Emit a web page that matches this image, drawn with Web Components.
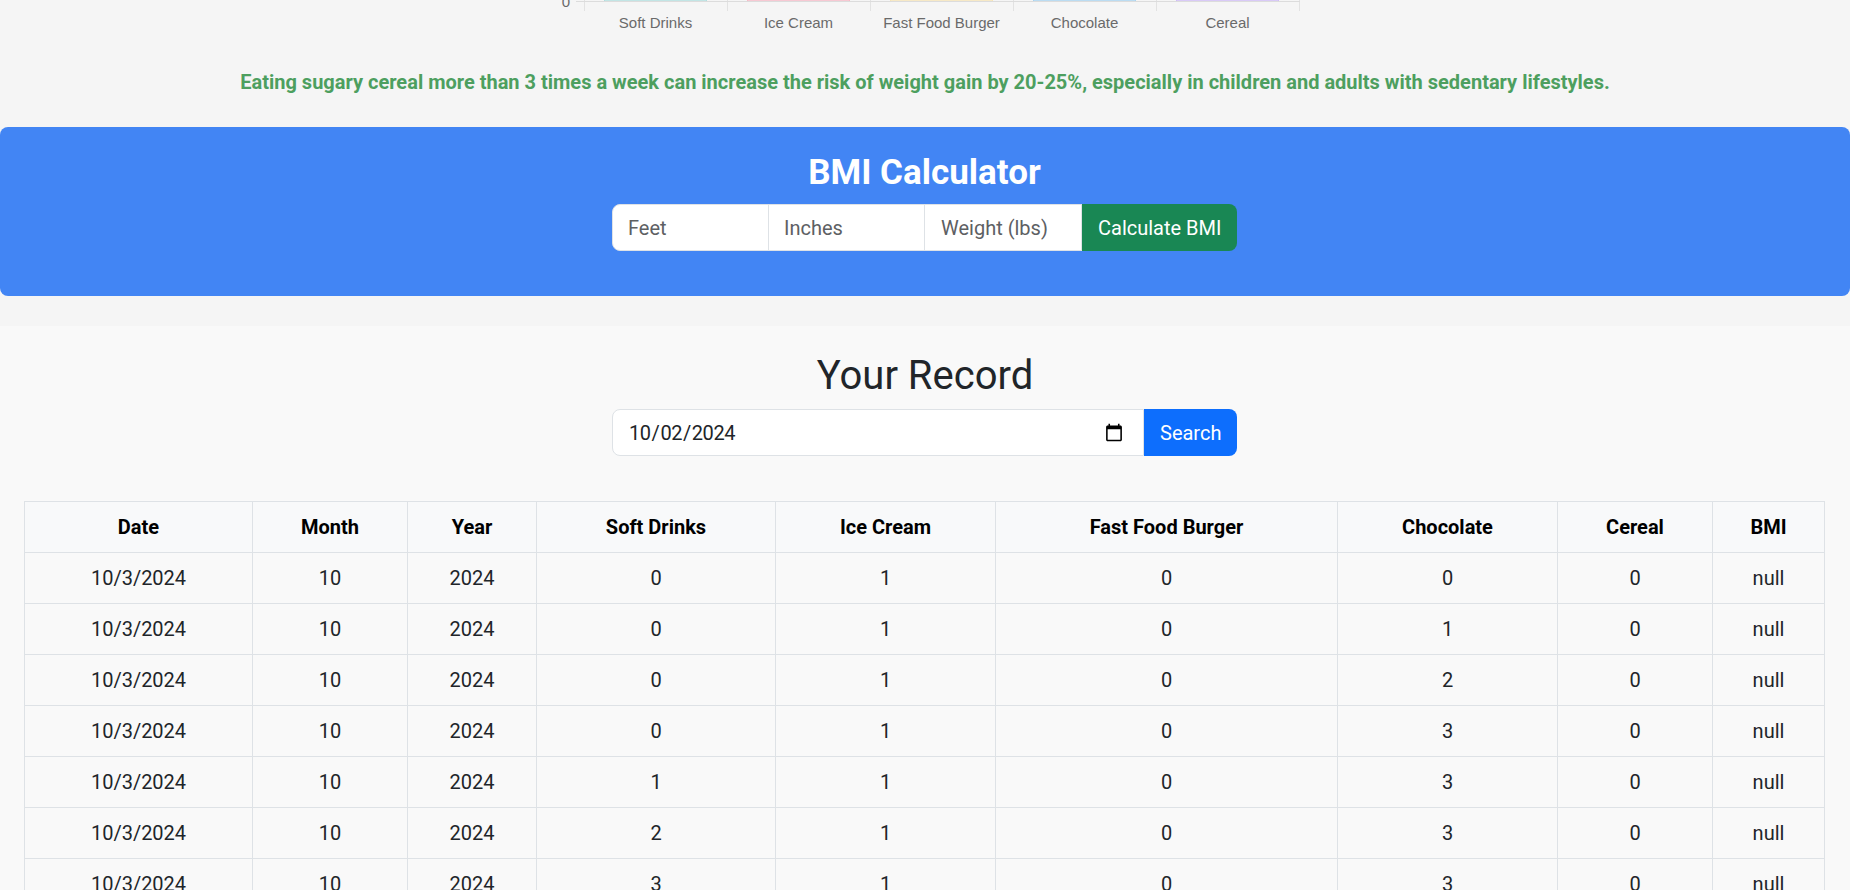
<!DOCTYPE html>
<html lang="en">
<head>
<meta charset="utf-8">
<title>BMI Calculator</title>
<style>
html,body{margin:0;padding:0;height:890px;overflow:hidden;background:#f5f5f5;font-family:Roboto,"Liberation Sans",sans-serif;}
</style>
</head>
<body>
<chart-axis></chart-axis>
<health-tip>Eating sugary cereal more than 3 times a week can increase the risk of weight gain by 20-25%, especially in children and adults with sedentary lifestyles.</health-tip>
<bmi-panel heading="BMI Calculator"></bmi-panel>
<record-section heading="Your Record"></record-section>
<script>
const define=(name,html,init)=>customElements.define(name,class extends HTMLElement{
  connectedCallback(){
    if(this.shadowRoot)return;
    const r=this.attachShadow({mode:'open'});
    r.innerHTML=typeof html==='function'?html(this):html;
    if(init)init(r,this);
  }
});

define('chart-axis',()=>{
  const bars=['75,192,192','255,99,132','255,206,86','54,162,235','153,102,255'];
  const labels=['Soft Drinks','Ice Cream','Fast Food Burger','Chocolate','Cereal'];
  let s='';
  for(let i=0;i<=5;i++){const x=584.5+i*143;s+=`<line x1="${x}" x2="${x}" y1="0" y2="11" stroke="#e2e2e2"/>`;}
  bars.forEach((b,i)=>{const x=604.5+i*143;
    s+=`<rect x="${x}" y="-2" width="102" height="3" fill="rgba(${b},.15)" stroke="rgba(${b},.35)" stroke-width="1"/>`;
    s+=`<text x="${x+51}" y="28" text-anchor="middle">${labels[i]}</text>`;
  });
  s+=`<line x1="576" x2="1300" y1="1.5" y2="1.5" stroke="#dcdcdc"/>`;
  s+=`<text x="566" y="7" text-anchor="middle">0</text>`;
  return `<style>:host{display:block;height:34px}svg{display:block;width:1850px;height:34px}
  text{font:15px "Liberation Sans",Arial,sans-serif;fill:#6a6a6a}</style>
  <svg viewBox="0 0 1850 34" role="img" aria-label="Intake chart axis">${s}</svg>`;
});

define('health-tip',`<style>:host{display:block;box-sizing:border-box;height:93px;padding-top:33px;text-align:center;
  font:700 20px/30px Roboto,"Liberation Sans",sans-serif;color:#4d9f5f}</style><slot></slot>`);

const fieldCss=`
  .group{display:flex;width:625px;margin-left:calc(50% - 313px)}
  input{box-sizing:border-box;flex:1 1 0;min-width:0;height:47px;margin:0;padding:8px 16px 8px 15px;font:400 20px/30px Roboto,"Liberation Sans",sans-serif;color:#212529;background:#fff;border:1px solid #dee2e6;border-radius:0;outline:0}
  input::placeholder{color:#5d6063;opacity:1}
  input:first-child{border-radius:8px 0 0 8px}
  input+input{margin-left:-1px}
  input:nth-child(3){padding-left:16px}
  button{box-sizing:border-box;flex:none;height:47px;margin:0;padding:8px 16px 8px 15px;text-align:left;white-space:nowrap;font:400 20px/30px Roboto,"Liberation Sans",sans-serif;color:#fff;border:1px solid transparent;border-radius:0 8px 8px 0;cursor:pointer}
`;

define('bmi-panel',h=>`<style>:host{display:block;box-sizing:border-box;height:169px;padding-top:25px;background:#4285f4;border-radius:8px;color:#fff;text-align:center}
  h2{margin:0 0 10px;padding-right:1px;font:700 35px/42px Roboto,"Liberation Sans",sans-serif}
  ${fieldCss}
  button{background:#198754;width:155px}
  </style>
  <h2>${h.getAttribute('heading')}</h2>
  <div class="group"><input placeholder="Feet" type="text"><input placeholder="Inches" type="text"><input placeholder="Weight (lbs)" type="text"><button>Calculate BMI</button></div>`);

define('record-table',()=>{
  const cols=[228,155,129,239,220,342,220,155,112];
  const head=['Date','Month','Year','Soft Drinks','Ice Cream','Fast Food Burger','Chocolate','Cereal','BMI'];
  const data=[[0,1,0,0,0],[0,1,0,1,0],[0,1,0,2,0],[0,1,0,3,0],[1,1,0,3,0],[2,1,0,3,0],[3,1,0,3,0]];
  return `<style>:host{display:block}
  table{table-layout:fixed;border-collapse:collapse;width:1800px;margin:0;font:400 20px/30px Roboto,"Liberation Sans",sans-serif;color:#212529;background:#f9f9f9}
  th,td{box-sizing:border-box;height:51px;padding:10px;border:1px solid #dee2e6;text-align:center}
  th{font-weight:700;color:#000;background:#f8f9fa}
  </style><table><colgroup>${cols.map(c=>`<col style="width:${c}px">`).join('')}</colgroup>
  <thead><tr>${head.map(t=>`<th>${t}</th>`).join('')}</tr></thead>
  <tbody>${data.map(d=>`<tr><td>10/3/2024</td><td>10</td><td>2024</td>${d.map(v=>`<td>${v}</td>`).join('')}<td>null</td></tr>`).join('')}</tbody></table>`;
});

define('record-section',h=>`<style>:host{display:block;box-sizing:border-box;margin-top:30px;height:564px;padding-top:26px;background:#f9f9f9;text-align:center;overflow:hidden}
  h1{margin:0 0 9px;font:400 40px/48px Roboto,"Liberation Sans",sans-serif;color:#212529}
  ${fieldCss}
  .group{margin-bottom:45px}
  input{text-align:left;letter-spacing:-.45px;padding-right:17px}
  button{background:#0d6efd;width:93px}
  .wrap{padding:0 24px;text-align:left}
  </style>
  <h1>${h.getAttribute('heading')}</h1>
  <div class="group"><input type="date" value="2024-10-02"><button>Search</button></div>
  <div class="wrap"><record-table></record-table></div>`);
</script>
</body>
</html>
